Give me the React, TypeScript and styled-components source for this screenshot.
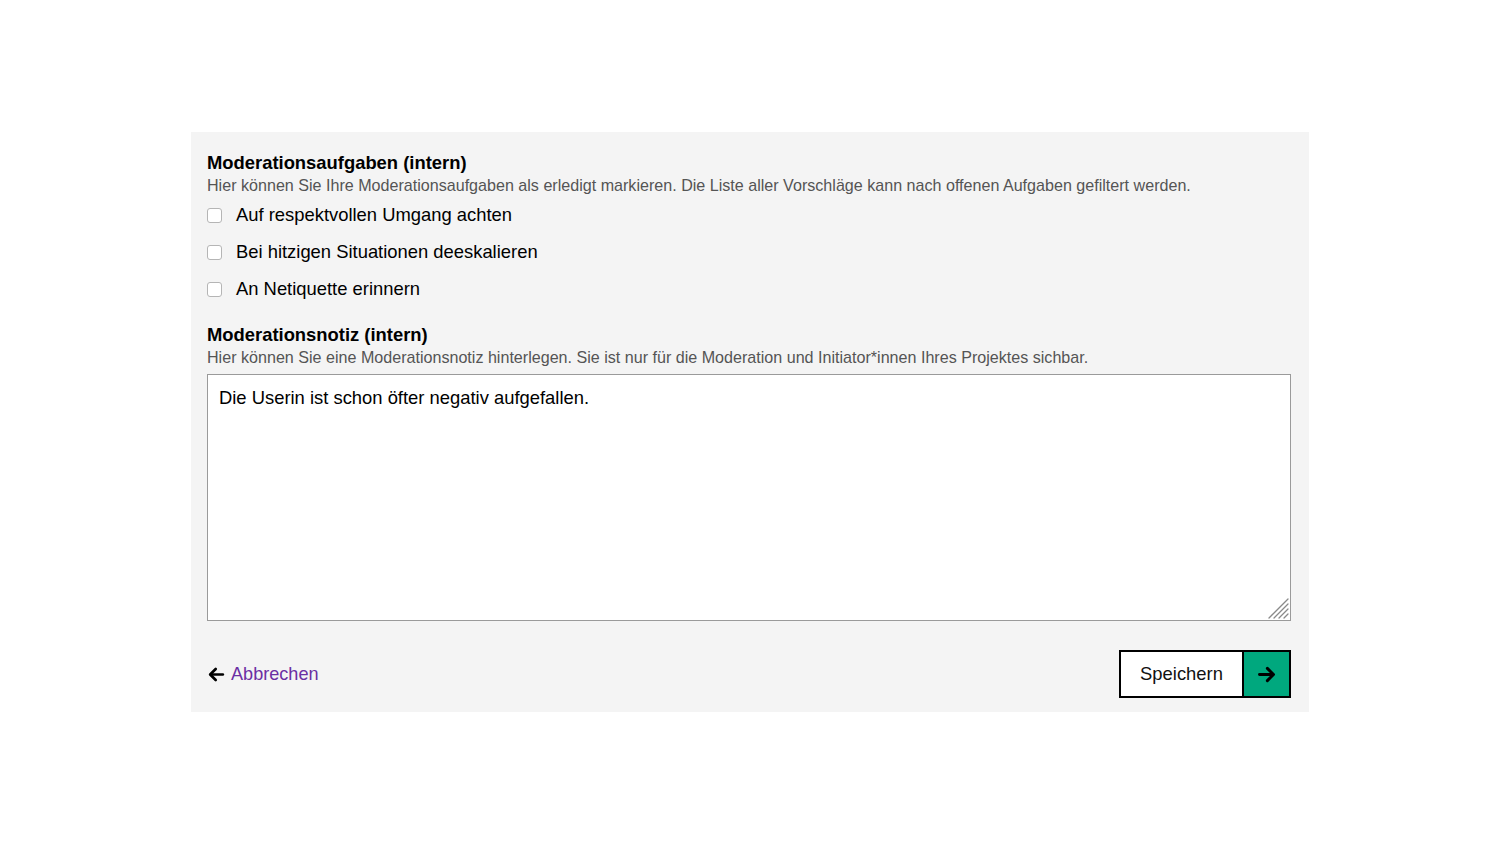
import React, { useState } from "react";
import styled, { createGlobalStyle } from "styled-components";

const Global = createGlobalStyle`
  html, body { margin: 0; padding: 0; background: #ffffff; }
  body { font-family: "Liberation Sans", Arial, Helvetica, sans-serif; color: #000; }
  * { box-sizing: border-box; }
`;

const Page = styled.div`
  width: 1500px;
  height: 844px;
  display: flex;
  justify-content: center;
  padding-top: 132px;
`;

const Panel = styled.form`
  width: 1118px;
  height: 580px;
  background: #f4f4f4;
  padding: 20px 17px 14px 16px;
  display: flex;
  flex-direction: column;
`;

const Section = styled.fieldset<{ $mb?: number }>`
  border: 0;
  margin: 0;
  padding: 0;
  display: flex;
  flex-direction: column;
  margin-bottom: ${(p) => p.$mb ?? 0}px;
`;

const Heading = styled.legend`
  font-size: 18.4px;
  font-weight: 700;
  line-height: 22px;
  padding: 0;
  margin: 0;
`;

const Help = styled.p`
  font-size: 16.1px;
  line-height: 20px;
  color: #555;
  margin: 1px 0 0 0;
`;

const CheckList = styled.div`
  display: flex;
  flex-direction: column;
  gap: 13px;
  margin-top: 8px;
`;

const CheckRow = styled.label`
  display: flex;
  align-items: center;
  gap: 14px;
  font-size: 18.4px;
  line-height: 24px;
  cursor: pointer;
`;

const Box = styled.input`
  appearance: none;
  width: 15px;
  height: 15px;
  margin: 0;
  border: 1px solid #b5b5b5;
  border-radius: 3px;
  background: #fff;
  flex: none;
  &:checked {
    background: #00a87e;
    border-color: #00a87e;
  }
`;

const AreaWrap = styled.div`
  position: relative;
  margin-top: 7px;
  width: 1084px;
  height: 247px;
`;

const Area = styled.textarea`
  display: block;
  width: 100%;
  height: 100%;
  border: 1px solid #9a9a9a;
  background: #fff;
  padding: 12px 11px;
  font-family: "Liberation Sans", Arial, Helvetica, sans-serif;
  font-size: 18.4px;
  line-height: 22px;
  color: #000;
  resize: none;
  outline: none;
`;

const Grip = styled.svg`
  position: absolute;
  right: 2px;
  bottom: 2px;
  pointer-events: none;
`;

const Footer = styled.div`
  margin-top: auto;
  display: flex;
  align-items: center;
  justify-content: space-between;
  width: 1084px;
`;

const BackLink = styled.a`
  display: flex;
  align-items: center;
  gap: 5px;
  font-size: 18.1px;
  color: #6b2fa3;
  text-decoration: none;
  cursor: pointer;
  svg { color: #000; }
`;

const SaveButton = styled.button`
  display: flex;
  align-items: stretch;
  height: 48px;
  padding: 0;
  border: 2px solid #000;
  background: #fff;
  font-family: "Liberation Sans", Arial, Helvetica, sans-serif;
  cursor: pointer;
`;

const SaveLabel = styled.span`
  width: 123px;
  display: flex;
  align-items: center;
  justify-content: center;
  font-size: 18.4px;
  color: #111;
  border-right: 2px solid #000;
`;

const SaveIcon = styled.span`
  width: 45px;
  display: flex;
  align-items: center;
  justify-content: center;
  background: #00a87e;
  color: #000;
`;

const Arrow = ({ dir, size }: { dir: "left" | "right"; size: number }) => (
  <svg
    width={size}
    height={size}
    viewBox="0 0 24 24"
    fill="none"
    stroke="currentColor"
    strokeWidth={3.4}
    strokeLinecap="round"
    strokeLinejoin="round"
    style={{ transform: dir === "left" ? "scaleX(-1)" : undefined }}
  >
    <path d="M4 12h15" />
    <path d="M13 5l7 7-7 7" />
  </svg>
);

const tasks = [
  "Auf respektvollen Umgang achten",
  "Bei hitzigen Situationen deeskalieren",
  "An Netiquette erinnern",
];

export default function App() {
  const [note, setNote] = useState("Die Userin ist schon öfter negativ aufgefallen.");
  return (
    <>
      <Global />
      <Page>
        <Panel onSubmit={(e) => e.preventDefault()}>
          <Section $mb={23}>
            <Heading>Moderationsaufgaben (intern)</Heading>
            <Help>
              Hier können Sie Ihre Moderationsaufgaben als erledigt markieren. Die Liste aller Vorschläge kann nach offenen Aufgaben gefiltert werden.
            </Help>
            <CheckList>
              {tasks.map((t) => (
                <CheckRow key={t}>
                  <Box type="checkbox" />
                  {t}
                </CheckRow>
              ))}
            </CheckList>
          </Section>
          <Section>
            <Heading>Moderationsnotiz (intern)</Heading>
            <Help>
              Hier können Sie eine Moderationsnotiz hinterlegen. Sie ist nur für die Moderation und Initiator*innen Ihres Projektes sichbar.
            </Help>
            <AreaWrap>
              <Area value={note} onChange={(e) => setNote(e.target.value)} />
              <Grip width="22" height="22" viewBox="0 0 22 22" stroke="#8a8a8a" strokeWidth="1.3" strokeLinecap="round">
                <path d="M2 21L21 2" />
                <path d="M7 21L21 7" />
                <path d="M12 21L21 12" />
                <path d="M17 21L21 17" />
              </Grip>
            </AreaWrap>
          </Section>
          <Footer>
            <BackLink>
              <Arrow dir="left" size={19} />
              Abbrechen
            </BackLink>
            <SaveButton type="submit">
              <SaveLabel>Speichern</SaveLabel>
              <SaveIcon>
                <Arrow dir="right" size={21} />
              </SaveIcon>
            </SaveButton>
          </Footer>
        </Panel>
      </Page>
    </>
  );
}
